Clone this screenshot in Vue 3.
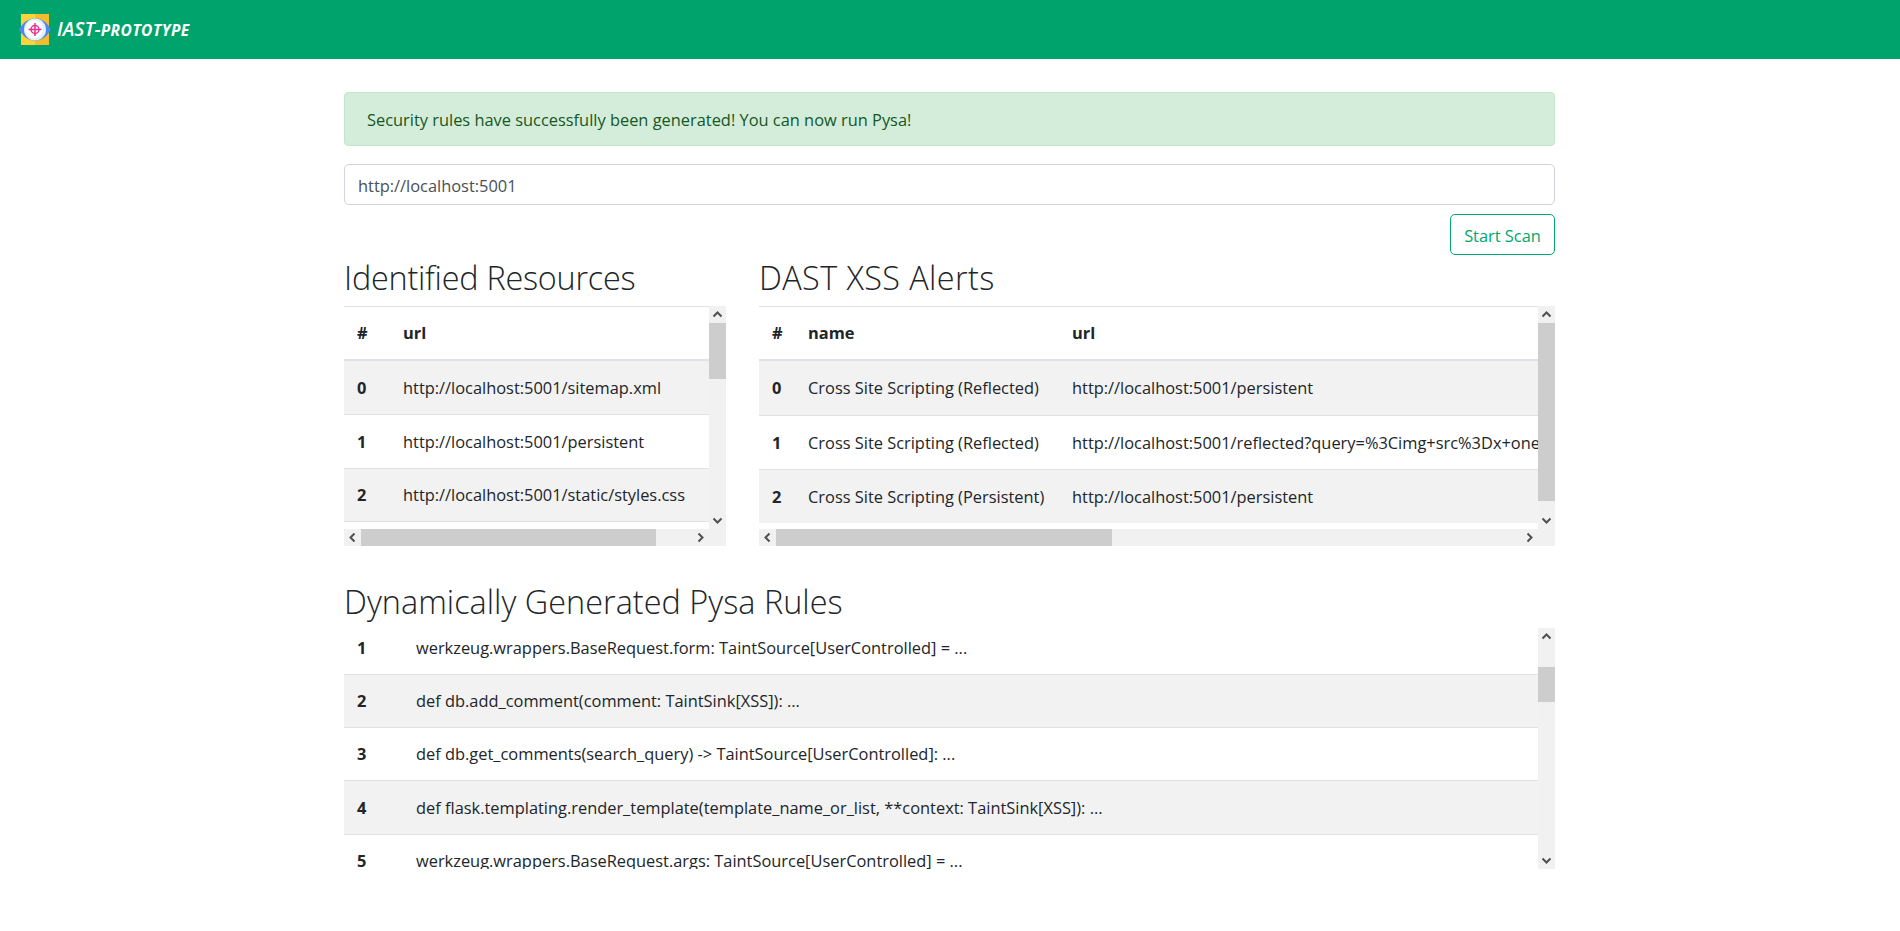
<template>
  <div class="app-root">
    <nav class="navbar">
      <svg class="logo" viewBox="0 0 34 33" width="34" height="33">
        <rect x="3" y="1" width="28" height="31" fill="#fbd437" />
        <rect x="17" y="1" width="14" height="31" fill="#f2bc2c" />
        <path d="M1 16.500C6 8 11 5.500 17 5.500S28 8 33 16.500C28 25 23 27.500 17 27.500S6 25 1 16.500Z" fill="#4f86f0" />
        <circle cx="17" cy="16.500" r="11" fill="#dff1fb" />
        <circle cx="16" cy="16.500" r="9" fill="#fff" />
        <circle cx="17" cy="16.500" r="4" fill="none" stroke="#e8308c" stroke-width="1.500" />
        <path d="M17 10v13M10.500 16.500h13" stroke="#e8308c" stroke-width="1.500" />
      </svg>
      <span class="brand">IAST-<span class="brand-small">prototype</span></span>
    </nav>

    <main class="page">
      <div class="alert">Security rules have successfully been generated! You can now run Pysa!</div>
      <input class="url-input" type="text" value="http://localhost:5001" />
      <div class="actions">
        <button class="btn-scan">Start Scan</button>
      </div>

      <div class="columns">
        <section>
          <h3 class="title title-resources">Identified Resources</h3>
          <div class="frame with-hbar">
            <div class="viewport">
              <table class="grid resources">
                <thead>
                  <tr><th class="num">#</th><th>url</th></tr>
                </thead>
                <tbody>
                  <tr v-for="(url, i) in resources" :key="i">
                    <th class="num">{{ i }}</th>
                    <td>{{ url }}</td>
                  </tr>
                </tbody>
              </table>
            </div>
            <div class="vbar">
              <svg class="arrow" viewBox="0 0 17 17"><path d="M4.500 10.500 8.500 6.500 12.500 10.500" /></svg>
              <div class="track"><div class="thumb" :style="{ height: thumbs.resourcesV + 'px' }"></div></div>
              <svg class="arrow" viewBox="0 0 17 17"><path d="M4.500 6.500 8.500 10.500 12.500 6.500" /></svg>
            </div>
            <div class="hbar">
              <svg class="arrow" viewBox="0 0 17 17"><path d="M10.500 4.500 6.500 8.500 10.500 12.500" /></svg>
              <div class="track"><div class="thumb" :style="{ width: thumbs.resourcesH + 'px' }"></div></div>
              <svg class="arrow" viewBox="0 0 17 17"><path d="M6.500 4.500 10.500 8.500 6.500 12.500" /></svg>
            </div>
            <div class="corner"></div>
          </div>
        </section>

        <section>
          <h3 class="title title-alerts">DAST XSS Alerts</h3>
          <div class="frame with-hbar">
            <div class="viewport">
              <table class="grid alerts">
                <thead>
                  <tr><th class="num">#</th><th class="name">name</th><th>url</th></tr>
                </thead>
                <tbody>
                  <tr v-for="(a, i) in xssAlerts" :key="i">
                    <th class="num">{{ i }}</th>
                    <td class="name">{{ a.name }}</td>
                    <td>{{ a.url }}</td>
                  </tr>
                </tbody>
              </table>
            </div>
            <div class="vbar">
              <svg class="arrow" viewBox="0 0 17 17"><path d="M4.500 10.500 8.500 6.500 12.500 10.500" /></svg>
              <div class="track"><div class="thumb" :style="{ height: thumbs.alertsV + 'px' }"></div></div>
              <svg class="arrow" viewBox="0 0 17 17"><path d="M4.500 6.500 8.500 10.500 12.500 6.500" /></svg>
            </div>
            <div class="hbar">
              <svg class="arrow" viewBox="0 0 17 17"><path d="M10.500 4.500 6.500 8.500 10.500 12.500" /></svg>
              <div class="track"><div class="thumb" :style="{ width: thumbs.alertsH + 'px' }"></div></div>
              <svg class="arrow" viewBox="0 0 17 17"><path d="M6.500 4.500 10.500 8.500 6.500 12.500" /></svg>
            </div>
            <div class="corner"></div>
          </div>
        </section>
      </div>

      <h3 class="title rules-title">Dynamically Generated Pysa Rules</h3>
      <div class="frame rules-frame">
        <div ref="rulesBox" class="viewport">
          <table class="grid rules">
            <thead>
              <tr><th class="num">#</th><th>rule</th></tr>
            </thead>
            <tbody>
              <tr v-for="(rule, i) in rules" :key="i">
                <th class="num">{{ i }}</th>
                <td>{{ rule }}</td>
              </tr>
            </tbody>
          </table>
        </div>
        <div class="vbar">
          <svg class="arrow" viewBox="0 0 17 17"><path d="M4.500 10.500 8.500 6.500 12.500 10.500" /></svg>
          <div class="track">
            <div class="thumb" :style="{ height: thumbs.rulesV + 'px', marginTop: thumbs.rulesTop + 'px' }"></div>
          </div>
          <svg class="arrow" viewBox="0 0 17 17"><path d="M4.500 6.500 8.500 10.500 12.500 6.500" /></svg>
        </div>
      </div>
    </main>
  </div>
</template>

<script setup>
import { ref, onMounted } from 'vue'

const base = 'http://localhost:5001'
const resources = [
  '/sitemap.xml', '/persistent', '/static/styles.css', '/', '/reflected', '/robots.txt',
  '/static', '/reflected?query=test', '/dom', '/comments', '/search', '/login',
  '/logout', '/static/app.js', '/favicon.ico', '/about',
].map(p => base + p)

const xssAlerts = [
  { name: 'Cross Site Scripting (Reflected)', url: base + '/persistent' },
  { name: 'Cross Site Scripting (Reflected)', url: base + '/reflected?query=%3Cimg+src%3Dx+onerror%3Dalert%281%29%3E' },
  { name: 'Cross Site Scripting (Persistent)', url: base + '/persistent' },
]

const visibleRules = [
  'def flask.request.get_data() -> TaintSource[UserControlled]: ...',
  'werkzeug.wrappers.BaseRequest.form: TaintSource[UserControlled] = ...',
  'def db.add_comment(comment: TaintSink[XSS]): ...',
  'def db.get_comments(search_query) -> TaintSource[UserControlled]: ...',
  'def flask.templating.render_template(template_name_or_list, **context: TaintSink[XSS]): ...',
  'werkzeug.wrappers.BaseRequest.args: TaintSource[UserControlled] = ...',
]
const rules = [...visibleRules]
while (rules.length < 24) rules.push(visibleRules[rules.length % visibleRules.length])

// sizes of the scrollbar handles, headless chrome draws no real ones
const thumbs = {
  resourcesV: 56,
  resourcesH: 295,
  alertsV: 178,
  alertsH: 336,
  rulesV: 35,
  rulesTop: 22,
}

const rulesBox = ref(null)

onMounted(() => {
  rulesBox.value.scrollTop = 151
})
</script>

<style>
html, body {
  margin: 0;
  background: #fff;
  overflow: hidden;
}
</style>

<style scoped>
.app-root {
  font-family: "Open Sans", "Liberation Sans", sans-serif;
  font-size: 16.400px;
  line-height: 26.600px;
  color: #212529;
}
.navbar {
  display: flex;
  align-items: center;
  height: 59px;
  padding-left: 18px;
  background: #00a36c;
}
.brand {
  margin-left: 5px;
  color: #fff;
  font-size: 19.500px;
  font-style: italic;
  font-weight: 600;
}
.brand-small {
  font-size: 15.500px;
  font-weight: 700;
  letter-spacing: 0.500px;
  text-transform: uppercase;
}
.page {
  padding: 33px 345px 0 344px;
}
.alert {
  box-sizing: border-box;
  height: 54px;
  padding: 0 22px;
  line-height: 54px;
  color: #155724;
  background: #d4edda;
  border: 1px solid #c3e6cb;
  border-radius: 4px;
}
.url-input {
  display: block;
  box-sizing: border-box;
  width: 100%;
  height: 41px;
  margin-top: 18px;
  padding: 2px 13px 0;
  font: inherit;
  color: #495057;
  background: #fff;
  border: 1px solid #ced4da;
  border-radius: 5px;
  outline: none;
}
.actions {
  display: flex;
  justify-content: flex-end;
  margin-top: 9px;
}
.btn-scan {
  box-sizing: border-box;
  width: 105px;
  height: 41px;
  padding: 3px 0 0;
  font: inherit;
  color: #00a86b;
  background: #fff;
  border: 1px solid #00a86b;
  border-radius: 5px;
}
.columns {
  display: grid;
  grid-template-columns: 382px 796px;
  column-gap: 33px;
}
.title {
  height: 51px;
  margin: 0;
  font-size: 32.400px;
  font-weight: 300;
  line-height: 45px;
}
.title-resources {
  letter-spacing: -0.240px;
}
.title-alerts {
  letter-spacing: 0.400px;
}
.rules-title {
  height: 52px;
  margin-top: 30px;
  line-height: 51px;
  letter-spacing: 0.030px;
}
.frame {
  display: grid;
  grid-template-columns: minmax(0, 1fr) 17px;
  height: 241px;
}
.with-hbar {
  grid-template-rows: 223px 17px;
  height: 240px;
}
.viewport {
  overflow: hidden;
}
.vbar,
.hbar {
  display: flex;
  background: #f1f1f1;
}
.vbar {
  flex-direction: column;
}
.track {
  flex: 1;
  min-width: 0;
  min-height: 0;
}
.vbar .thumb {
  width: 17px;
}
.hbar .thumb {
  height: 17px;
}
.thumb {
  background: #cdcdcd;
}
.arrow {
  flex: none;
  width: 17px;
  height: 17px;
}
.arrow path {
  fill: none;
  stroke: #505050;
  stroke-width: 2;
}
.corner {
  background: #f1f1f1;
}
.grid {
  table-layout: fixed;
  border-collapse: separate;
  border-spacing: 0;
  white-space: nowrap;
}
.grid th,
.grid td {
  box-sizing: border-box;
  padding: 1px 13px 0;
  text-align: left;
  border-top: 1px solid #dee2e6;
}
.grid thead th {
  height: 55px;
  border-bottom: 2px solid #dee2e6;
}
.grid tbody th,
.grid tbody td {
  height: 53.330px;
}
.grid tbody tr:first-child th,
.grid tbody tr:first-child td {
  border-top: 0;
}
.grid tbody tr:nth-child(odd) {
  background: #f2f2f2;
}
.resources {
  width: 410px;
}
.resources .num {
  width: 46px;
}
.alerts {
  width: 1727px;
}
.alerts tbody th,
.alerts tbody td {
  height: 54px;
}
.alerts .num {
  width: 36px;
}
.alerts .name {
  width: 264px;
}
.rules {
  width: 1194px;
}
.rules thead th {
  height: 90px;
}
.rules .num {
  width: 59px;
}
</style>
